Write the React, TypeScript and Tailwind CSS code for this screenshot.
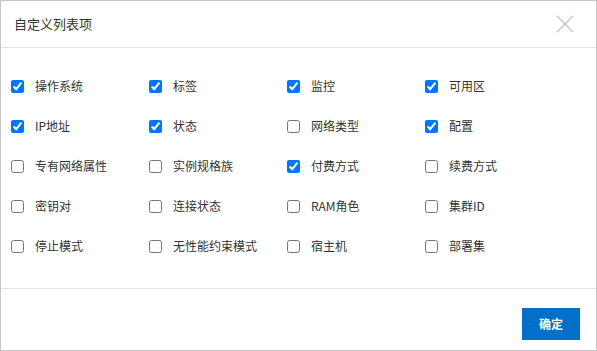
import { useState } from "react";

const items: [string, boolean][] = [
    ["操作系统", true],
    ["标签", true],
    ["监控", true],
    ["可用区", true],
    ["IP地址", true],
    ["状态", true],
    ["网络类型", false],
    ["配置", true],
    ["专有网络属性", false],
    ["实例规格族", false],
    ["付费方式", true],
    ["续费方式", false],
    ["密钥对", false],
    ["连接状态", false],
    ["RAM角色", false],
    ["集群ID", false],
    ["停止模式", false],
    ["无性能约束模式", false],
    ["宿主机", false],
    ["部署集", false],
];

export default function App() {
    const [checked, setChecked] = useState(items.map((i) => i[1]));

    return (
        <div
            className="w-[597px] h-[351px] bg-white border border-[#c6c6c6] flex flex-col text-[#333]"
            style={{ fontFamily: '"Noto Sans CJK SC", "Noto Sans", sans-serif' }}
        >
            {/* Header */}
            <div className="h-[47px] shrink-0 flex items-center justify-between pl-[13px] pr-[22px] border-b border-[#e3e3e3]">
                <span className="text-[13px]">自定义列表项</span>
                <svg width="18" height="18" viewBox="0 0 18 18" className="text-[#c9c9c9]">
                    <path d="M1 1L17 17M17 1L1 17" stroke="currentColor" strokeWidth="1.6" />
                </svg>
            </div>

            {/* Body */}
            <div className="flex-1 pt-[18px] pl-[10px]">
                <div className="grid grid-cols-[138px_138px_138px_138px]">
                    {items.map(([label], i) => (
                        <label key={label} className="h-10 flex items-center gap-[11px] text-[12px]">
                            <input
                                type="checkbox"
                                className="m-0 w-[13px] h-[13px]"
                                checked={checked[i]}
                                onChange={() =>
                                    setChecked(checked.map((c, j) => (j === i ? !c : c)))
                                }
                            />
                            <span>{label}</span>
                        </label>
                    ))}
                </div>
            </div>

            {/* Footer */}
            <div className="h-[62px] shrink-0 border-t border-[#e3e3e3] flex items-start justify-end pt-[19px] pr-[16px]">
                <button className="w-[58px] h-[32px] bg-[#0070cc] text-white text-[12px] font-bold">
                    确定
                </button>
            </div>
        </div>
    );
}
